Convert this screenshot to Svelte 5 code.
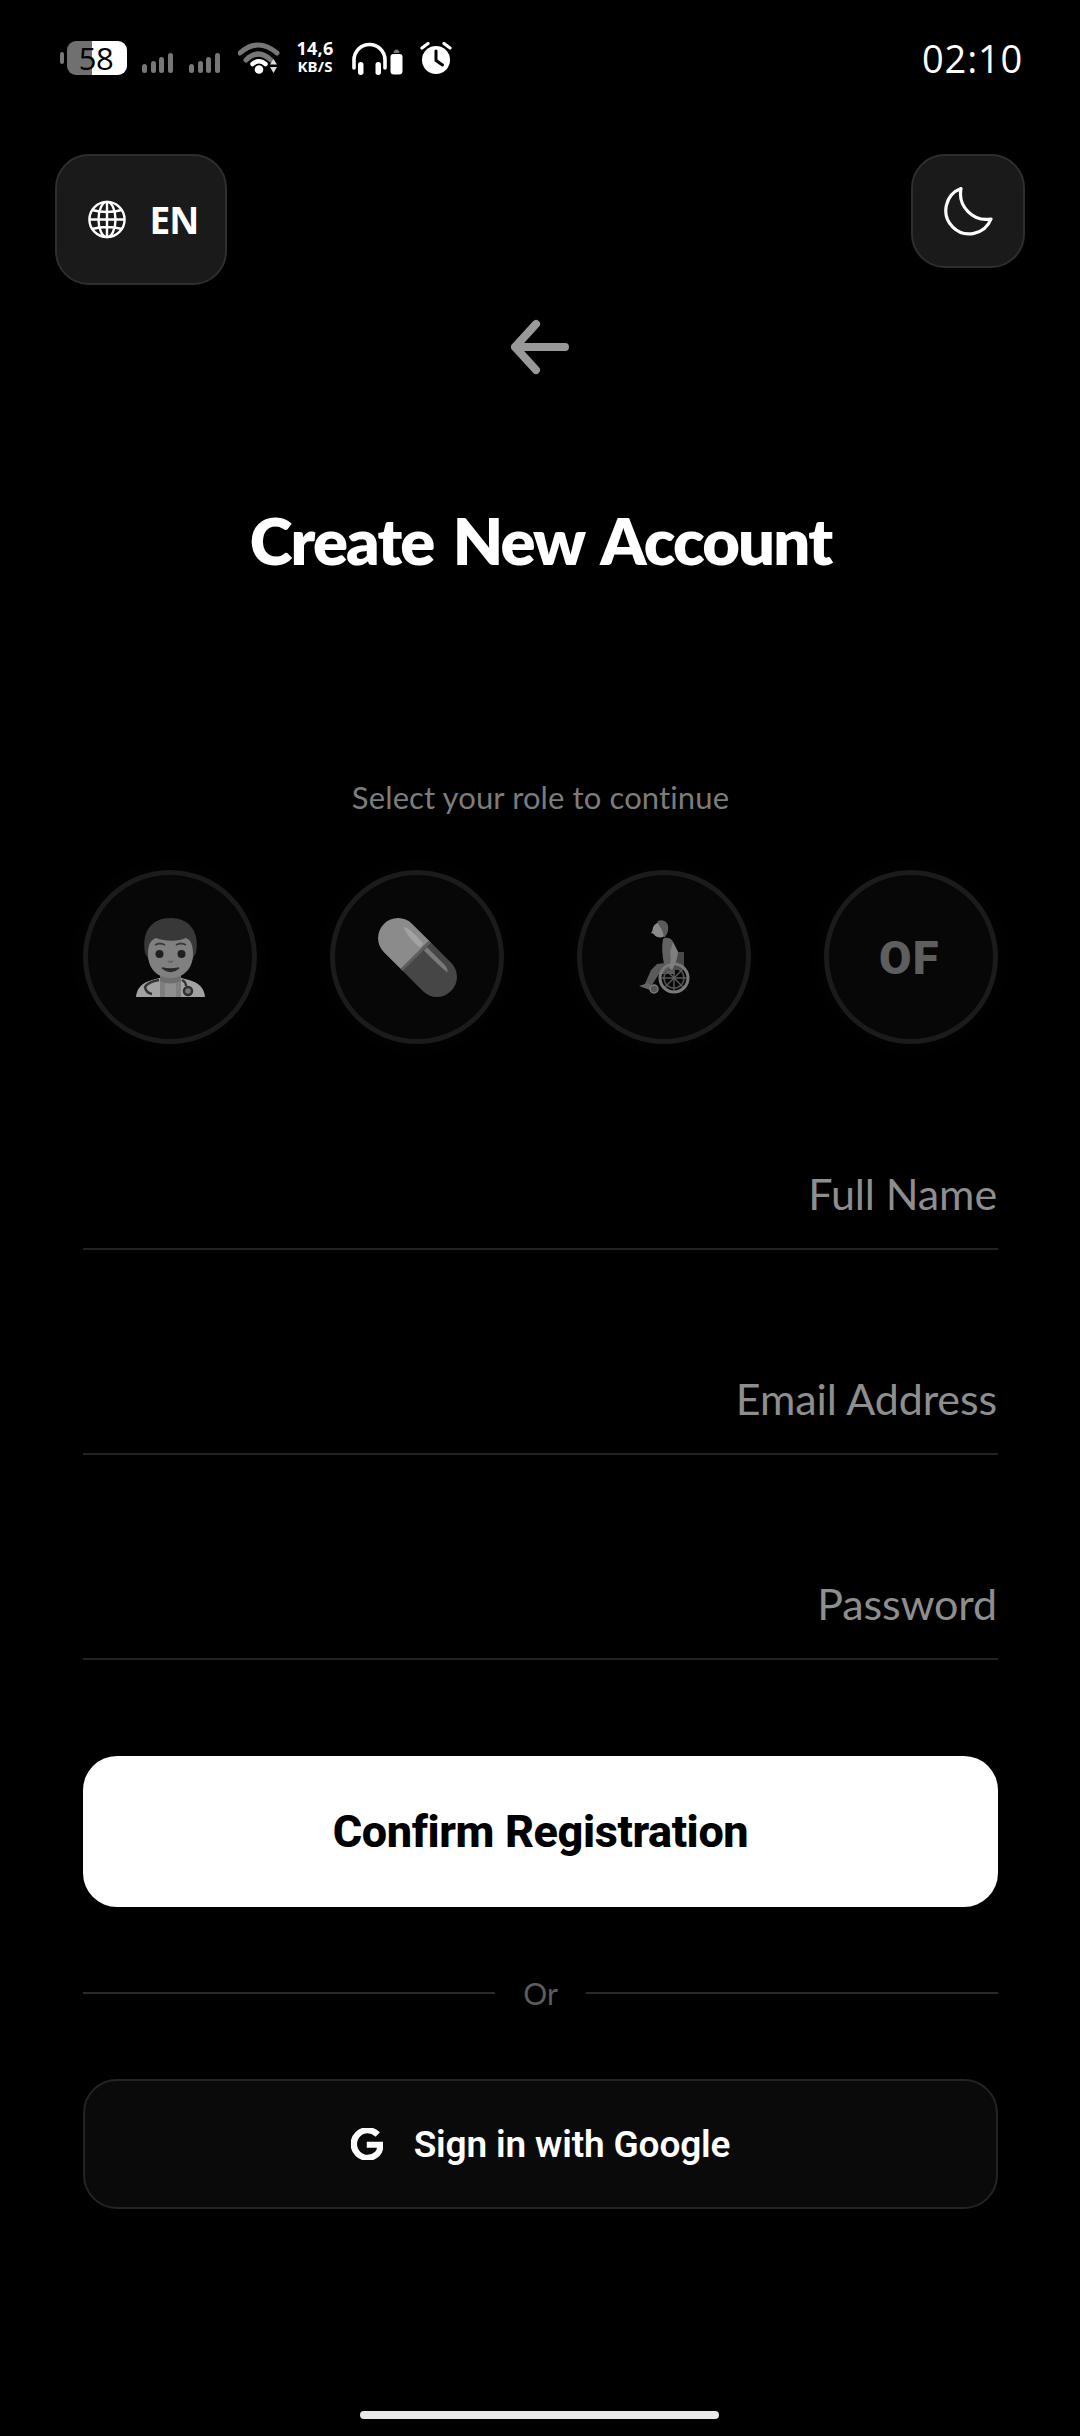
<script>
  const roles = ['doctor', 'pill', 'wheelchair', 'of'];
  const fields = ['Full Name', 'Email Address', 'Password'];
</script>

<div class="page">
  <header class="status">
    <div class="battery"><span class="nub"></span><span class="cell"><span class="pct">58</span></span></div>
    <svg class="sig s1" width="31" height="20" viewBox="0 0 31 20"><rect x="0" y="11" width="5" height="9" rx="2.5"/><rect x="9" y="8" width="5" height="12" rx="2.5"/><rect x="17" y="4" width="5" height="16" rx="2.5"/><rect x="26" y="0" width="5" height="20" rx="2.5"/></svg>
    <svg class="sig s2" width="31" height="20" viewBox="0 0 31 20"><rect x="0" y="11" width="5" height="9" rx="2.5"/><rect x="9" y="8" width="5" height="12" rx="2.5"/><rect x="17" y="4" width="5" height="16" rx="2.5"/><rect x="26" y="0" width="5" height="20" rx="2.5"/></svg>
    <svg class="wifi" width="42" height="34" viewBox="0 0 42 34" fill="none">
      <path d="M2 12 Q 20 -4 39 12" stroke="#777" stroke-width="5" stroke-linecap="round"/>
      <path d="M8 19 Q 20 7 33 19" stroke="#777" stroke-width="5" stroke-linecap="round"/>
      <path d="M14.5 23 Q 21 17.5 27.5 23" stroke="#fff" stroke-width="4.5" stroke-linecap="round"/>
      <circle cx="21" cy="28.5" r="4.3" fill="#fff"/>
      <path d="M32 23.5 L35.5 18 L39 23.5Z M32 26 L39 26 L35.5 32Z" fill="#ddd"/>
    </svg>
    <div class="speed"><span class="sp1">14,6</span><span class="sp2">KB/S</span></div>
    <svg class="phones" width="35" height="33" viewBox="0 0 35 33" fill="none">
      <path d="M2 26 V18 a15.5 15.5 0 0 1 31 0 V26" stroke="#fff" stroke-width="3.6" stroke-linecap="round"/>
      <rect x="6" y="20" width="5.5" height="13" rx="2.7" fill="#fff"/>
      <rect x="23.5" y="20" width="5.5" height="13" rx="2.7" fill="#fff"/>
    </svg>
    <svg class="pod" width="13" height="26" viewBox="0 0 13 26"><path d="M3.5 4 Q4 0.5 6.5 0.5 Q9 0.5 9.5 4Z" fill="#777"/><path d="M0.5 8 Q0.5 5 3.5 5 H9.5 Q12.5 5 12.5 8 V22 Q12.5 25.5 9 25.5 H4 Q0.5 25.5 0.5 22Z" fill="#fff"/></svg>
    <svg class="alarm" width="32" height="32" viewBox="0 0 32 32" fill="none">
      <circle cx="16" cy="18" r="14" fill="#fff"/>
      <path d="M16 9 V18.5 L22.5 23" stroke="#000" stroke-width="3" stroke-linecap="round" stroke-linejoin="round"/>
      <path d="M2 6 L8 1.5 M24 1.5 L30 6" stroke="#fff" stroke-width="3.2" stroke-linecap="round"/>
    </svg>
    <span class="clock">02:10</span>
  </header>

  <div class="top">
    <button class="chip lang">
      <svg width="38" height="39" viewBox="0 0 38 39" fill="none" stroke="#fff" stroke-width="2.4">
        <circle cx="19" cy="19.5" r="17.6"/>
        <ellipse cx="19" cy="19.5" rx="8.5" ry="17.6"/>
        <path d="M19 2 V37 M1.5 19.5 H36.5 M4 10 Q19 14 34 10 M4 29 Q19 25 34 29"/>
      </svg>
      <span>EN</span>
    </button>
    <button class="chip mode" aria-label="Theme">
      <svg width="50" height="50" viewBox="0 0 50 50" fill="none">
        <path d="M18 2.5 A23.4 23.4 0 1 0 48 33 A26 26 0 0 1 18 2.5 Z" stroke="#fff" stroke-width="3.2" stroke-linejoin="round"/>
      </svg>
    </button>
  </div>

  <div class="back">
    <svg width="64" height="60" viewBox="0 0 64 60" fill="none" stroke="#999" stroke-width="8" stroke-linecap="round" stroke-linejoin="round">
      <path d="M28 7 L7 30 L28 53 M7 30 H57"/>
    </svg>
  </div>

  <main class="content">
    <h1>Create New Account</h1>
    <p class="hint">Select your role to continue</p>

    <div class="roles">
      {#each roles as r}
        <div class="role">
          {#if r === 'doctor'}
            <svg width="69" height="79" viewBox="0 0 69 79">
              <path d="M0 79 Q1 66 16 62 L27 59 H42 L53 62 Q68 66 69 79Z" fill="#a2a2a2"/>
              <rect x="24" y="60" width="21" height="19" fill="#7f7f7f"/>
              <rect x="29" y="62" width="11" height="17" fill="#8f8f8f"/>
              <path d="M24 53 H45 V63 Q34.5 68 24 63Z" fill="#6e6e6e"/>
              <path d="M9 35 C5 12 17 0 34.5 0 C52 0 64 12 60 35 L56 42 H13Z" fill="#383838"/>
              <path d="M12 36 C12 26 15 22 20 20 C30 24 44 23 50 20 C55 22 57 27 57 36 C57 52 46 60 34.5 60 C23 60 12 52 12 36Z" fill="#808080"/>
              <circle cx="23.5" cy="36" r="4" fill="#1f1f1f"/>
              <circle cx="45.5" cy="36" r="4" fill="#1f1f1f"/>
              <path d="M19 27 Q24 24 29 27 M40 27 Q45 24 50 27" stroke="#3a3a3a" stroke-width="2" fill="none"/>
              <path d="M32 43 Q34.5 45 37 43" stroke="#666" stroke-width="2" fill="none"/>
              <path d="M26 50 Q34.5 57 43 50 Q34.5 52 26 50Z" fill="#2a2a2a" stroke="#2a2a2a" stroke-width="1.5"/>
              <path d="M23 62 Q12 64 9 69 Q10 75 16 76" stroke="#333" stroke-width="2.5" fill="none"/>
              <path d="M46 62 Q50 64 50 68" stroke="#333" stroke-width="2.5" fill="none"/>
              <circle cx="52" cy="73" r="4" fill="#777" stroke="#2f2f2f" stroke-width="2.5"/>
            </svg>
          {:else if r === 'pill'}
            <svg width="79" height="79" viewBox="0 0 79 79">
              <g transform="rotate(45 39.5 39.5)">
                <path d="M37 19.5 H12 A20 20 0 0 0 12 59.5 H37Z" fill="#8b8b8b"/>
                <path d="M37 19.5 H67 A20 20 0 0 1 67 59.5 H37Z" fill="#464646"/>
                <rect x="35.5" y="19.5" width="3" height="40" fill="#5f5f5f"/>
                <path d="M8 27.5 Q14 24 34 25.5 L34 31 Q16 32 8 27.5Z" fill="#a3a3a3"/>
                <path d="M39 25.5 H64 Q70 26 71 29 Q58 30 39 30Z" fill="#7a7a7a"/>
              </g>
            </svg>
          {:else if r === 'wheelchair'}
            <svg width="51" height="74" viewBox="0 0 51 74" fill="none">
              <rect x="36" y="32" width="9" height="18" fill="#4a4a4a"/>
              <path d="M18 44 L34 42 L36 54 L20 54 L11 68 L5 66 L12 50Z" fill="#5a5a5a"/>
              <path d="M0 66 L9 63 L14 67 L11 70Z" fill="#656565"/>
              <circle cx="35" cy="58" r="14" stroke="#7a7a7a" stroke-width="3"/>
              <circle cx="35" cy="58" r="10" stroke="#4f4f4f" stroke-width="1.6"/>
              <path d="M35 45 V71 M22 58 H48 M26 49 L44 67 M44 49 L26 67" stroke="#5a5a5a" stroke-width="1.4"/>
              <circle cx="15" cy="69" r="4" fill="#555" stroke="#7a7a7a" stroke-width="1.5"/>
              <path d="M24 19 Q28 16 33 20 L39 32 L36 44 L25 44 Q22 30 24 19Z" fill="#626262"/>
              <path d="M34 22 L39 32 Q38 42 33 50 L30 48 Q33 38 31 32Z" fill="#7f7f7f"/>
              <circle cx="21" cy="10" r="7.5" fill="#8a8a8a"/>
              <path d="M18 1.5 Q23 -1 27 2 Q31 6 28 14 L25 18 Q24 10 21 7Z" fill="#5a5a5a"/>
              <path d="M14 10 L12 13 L15 14Z" fill="#8a8a8a"/>
            </svg>
          {:else}
            <span class="of">OF</span>
          {/if}
        </div>
      {/each}
    </div>

    <div class="fields">
      {#each fields as f}
        <div class="field"><span>{f}</span></div>
      {/each}
    </div>

    <button class="confirm">Confirm Registration</button>

    <div class="or"><span class="rule"></span><span class="or-text">Or</span><span class="rule"></span></div>

    <button class="google">
      <svg width="32" height="32" viewBox="0 0 24 24" fill="#fff" stroke="#fff" stroke-width="1.3"><path d="M12.48 10.92v3.28h7.84c-.24 1.84-.853 3.187-1.787 4.133-1.147 1.147-2.933 2.4-6.053 2.4-4.827 0-8.6-3.893-8.6-8.72s3.773-8.72 8.6-8.72c2.6 0 4.507 1.027 5.907 2.347l2.307-2.307C18.747 1.44 16.133 0 12.48 0 5.867 0 .307 5.387.307 12s5.56 12 12.173 12c3.573 0 6.267-1.173 8.373-3.36 2.16-2.16 2.84-5.213 2.84-7.667 0-.76-.053-1.467-.173-2.053H12.48z"/></svg>
      <span>Sign in with Google</span>
    </button>
  </main>

  <div class="home"></div>
</div>

<style>
  :global(body) { margin: 0; background: #000; }
  .page { width: 1080px; height: 2436px; background: #000; overflow: hidden; display: flex; flex-direction: column; position: relative; }
  button { font: inherit; padding: 0; cursor: pointer; }

  .status { height: 154px; box-sizing: border-box; padding: 41px 59px 0 60px; display: flex; align-items: flex-start; }
  .battery { display: flex; align-items: center; height: 34px; width: 67px; gap: 3px; }
  .nub { width: 4px; height: 12px; border-radius: 2px; background: #777; }
  .cell { width: 60px; height: 34px; border-radius: 9px; background: linear-gradient(90deg, #707070 25px, #fff 25px); display: flex; align-items: center; justify-content: center; }
  .pct { font: 400 31px/34px "Open Sans", sans-serif; color: #000; letter-spacing: -0.5px; margin-left: -2px; }
  .sig { fill: #777; margin-top: 12px; }
  .s1 { margin-left: 15px; }
  .s2 { margin-left: 16px; }
  .wifi { margin-left: 18px; }
  .speed { margin-left: 15px; width: 40px; display: flex; flex-direction: column; align-items: center; color: #fff; font-family: "Noto Sans", sans-serif; font-weight: 700; margin-top: -2px; }
  .sp1 { font-size: 18px; line-height: 19px; letter-spacing: 0.2px; }
  .sp2 { font-size: 15px; line-height: 16px; letter-spacing: 0.2px; }
  .phones { margin-left: 17px; margin-top: 1px; }
  .pod { margin-left: 3px; margin-top: 8px; }
  .alarm { margin-left: 17px; margin-top: 1px; }
  .clock { margin-left: auto; margin-right: -2px; margin-top: -2px; font: 500 38px/38px "Open Sans", sans-serif; color: #fff; letter-spacing: 0.8px; }

  .top { display: flex; justify-content: space-between; align-items: flex-start; padding: 0 55px; height: 130px; }
  .chip { background: #1a1a1a; border: 2px solid #2e2e2e; border-radius: 34px; box-sizing: border-box; display: flex; align-items: center; justify-content: center; }
  .lang { width: 172px; height: 131px; gap: 24px; padding-left: 4px; color: #fff; font: 700 37px/1 "Noto Sans", sans-serif; letter-spacing: -1px; }
  .mode { width: 114px; height: 114px; }

  .back { height: 60px; margin-top: 33px; padding-left: 508px; }
  .back svg { display: block; }

  .content { display: flex; flex-direction: column; padding: 0 82px 0 83px; }
  h1 { margin: 123px 0 0; text-align: center; color: #fff; font: 800 65px/80px Lato, sans-serif; letter-spacing: -1.8px; word-spacing: 6px; }
  .hint { margin: 197px 0 0; text-align: center; color: #7c7c7c; font: 400 31px/40px Lato, sans-serif; letter-spacing: 0.12px; }

  .roles { margin-top: 53px; display: flex; justify-content: space-between; }
  .role { width: 174px; height: 174px; box-sizing: border-box; border-radius: 50%; border: 5px solid #1b1b1b; background: #070707; box-shadow: 0 0 24px rgba(255,255,255,0.025); display: flex; align-items: center; justify-content: center; }
  .of { font: 900 47px/1 Roboto, sans-serif; color: #5e5e5e; letter-spacing: 1.5px; margin-left: -3px; }

  .fields { margin-top: 32px; display: flex; flex-direction: column; }
  .field { height: 205px; box-sizing: border-box; border-bottom: 2px solid #222; display: flex; align-items: flex-end; justify-content: flex-end; padding: 0 1px 26px 0; color: #8e8e8e; font: 400 43px/56px Lato, sans-serif; letter-spacing: -0.1px; }
  .field:first-child { height: 174px; }

  .confirm { margin-top: 96px; height: 151px; border: 0; border-radius: 34px; background: #fff; color: #000; font: 800 45px/1 Roboto, sans-serif; letter-spacing: -0.4px; }

  .or { margin-top: 70px; height: 32px; display: flex; align-items: center; gap: 28px; }
  .rule { flex: 1; height: 2px; background: #2a2a2a; }
  .or-text { color: #5c5c5c; font: 400 30px/32px Lato, sans-serif; }

  .google { margin-top: 70px; height: 130px; box-sizing: border-box; border: 2px solid #242424; border-radius: 34px; background: #0a0a0a; color: #fff; display: flex; align-items: center; justify-content: center; gap: 31px; font: 600 37px/1 Roboto, sans-serif; letter-spacing: -0.15px; }

  .home { position: absolute; left: 360px; top: 2411px; width: 359px; height: 8px; border-radius: 4px; background: #e8e8e8; }
</style>
